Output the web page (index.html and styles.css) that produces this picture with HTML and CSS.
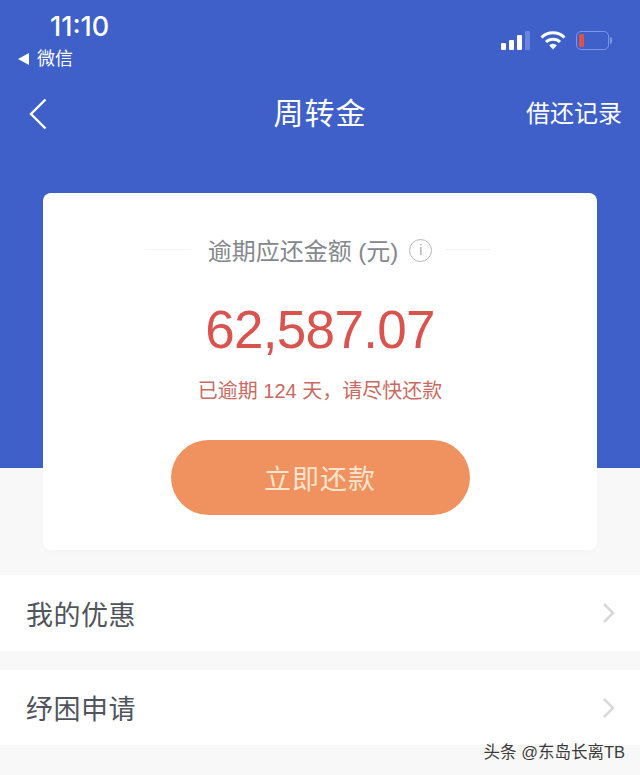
FILE: index.html
```html
<!DOCTYPE html>
<html lang="zh-CN">
<head>
    <meta charset="UTF-8">
    <meta name="viewport" content="width=device-width, initial-scale=1.0">
    <title>周转金</title>
    <link rel="stylesheet" href="styles.css">
</head>
<body>

    <div class="page">
        <header class="hero">
            <div class="status-bar">
                <div class="status-left">
                    <div class="time">11:10</div>
                    <div class="back-app"><span class="back-tri"></span>微信</div>
                </div>
                <div class="status-right">
                    <div class="signal">
                        <span class="bar bar-1"></span>
                        <span class="bar bar-2"></span>
                        <span class="bar bar-3"></span>
                        <span class="bar bar-4"></span>
                    </div>
                    <svg class="wifi" width="26" height="20" viewBox="0 0 26 20">
                        <path d="M1.5 7.5a16.5 16.5 0 0 1 23 0" fill="none" stroke="#fff" stroke-width="3"/>
                        <path d="M6 12a10 10 0 0 1 14 0" fill="none" stroke="#fff" stroke-width="3"/>
                        <path d="M13 19.500l-3.800-4.300a5.400 5.400 0 0 1 7.600 0z" fill="#fff"/>
                    </svg>
                    <div class="battery">
                        <div class="battery-body"><span class="battery-level"></span></div>
                        <span class="battery-tip"></span>
                    </div>
                </div>
            </div>
            <nav class="nav">
                <svg class="nav-back" width="20" height="34" viewBox="0 0 20 34">
                    <path d="M17.500 2.500L3 17l14.500 14.500" fill="none" stroke="#fff" stroke-width="2.400"/>
                </svg>
                <h1 class="nav-title">周转金</h1>
                <a class="nav-link">借还记录</a>
            </nav>
        </header>

        <main class="content">
            <section class="card">
                <div class="card-label">
                    <span class="fade-line"></span>
                    <span class="label-text">逾期应还金额 (元)</span>
                    <span class="info-icon">i</span>
                    <span class="fade-line"></span>
                </div>
                <div class="amount">62,587.07</div>
                <div class="overdue">已逾期 124 天，请尽快还款</div>
                <button class="repay-btn" type="button">立即还款</button>
            </section>

            <div class="row row-first">
                <span>我的优惠</span>
                <svg class="chevron" width="14" height="22" viewBox="0 0 14 22"><path d="M2 2l9 9-9 9" fill="none" stroke="#d8d8d8" stroke-width="2.500"/></svg>
            </div>
            <div class="row row-second">
                <span>纾困申请</span>
                <svg class="chevron" width="14" height="22" viewBox="0 0 14 22"><path d="M2 2l9 9-9 9" fill="none" stroke="#d8d8d8" stroke-width="2.500"/></svg>
            </div>
            <div class="footer-strip"></div>
        </main>

        <div class="watermark">头条 @东岛长离TB</div>
    </div>

</body>
</html>
```

FILE: styles.css
```css
* {
    box-sizing: border-box;
}
html, body {
    margin: 0;
    padding: 0;
}
body {
    font-family: "Liberation Sans", "Noto Sans CJK SC", sans-serif;
    background-color: #f8f8f8;
}
.page {
    position: relative;
    width: 640px;
    height: 775px;
    overflow: hidden;
}
.hero {
    height: 468px;
    background: #3e60c8;
    color: white;
    padding: 11px 18px 0 18px;
}
.status-bar {
    display: flex;
    justify-content: space-between;
    align-items: flex-start;
}
.status-left {
    display: flex;
    flex-direction: column;
}
.time {
    font-family: "Inter", "Liberation Sans", sans-serif;
    font-size: 27px;
    line-height: 32px;
    font-weight: 500;
    margin-left: 32px;
}
.back-app {
    display: flex;
    align-items: center;
    font-size: 18px;
    line-height: 28px;
    margin-top: 2px;
}
.back-tri {
    width: 0;
    height: 0;
    border-top: 6px solid transparent;
    border-bottom: 6px solid transparent;
    border-right: 11px solid white;
    margin-right: 8px;
}
.status-right {
    display: flex;
    align-items: center;
    gap: 10px;
    margin-top: 19px;
    margin-right: 10px;
}
.signal {
    display: flex;
    align-items: flex-end;
    gap: 3px;
    height: 20px;
}
.bar {
    display: block;
    width: 5px;
    background: white;
    border-radius: 1px;
}
.bar-1 { height: 7px; }
.bar-2 { height: 10px; }
.bar-3 { height: 15px; }
.bar-4 { height: 19px; background: #6a86dc; }
.battery {
    display: flex;
    align-items: center;
    gap: 1px;
}
.battery-body {
    width: 33px;
    height: 19px;
    border: 1.500px solid #7d97e6;
    border-radius: 5px;
    padding: 2px;
}
.battery-level {
    display: block;
    width: 5px;
    height: 100%;
    background: #e2504a;
    border-radius: 1px;
}
.battery-tip {
    width: 2px;
    height: 7px;
    background: #7d97e6;
    border-radius: 0 2px 2px 0;
}
.nav {
    display: flex;
    align-items: center;
    justify-content: space-between;
    position: relative;
    height: 40px;
    margin-top: 21px;
}
.nav-back {
    margin-left: 10px;
}
.nav-title {
    position: absolute;
    left: 0;
    right: 0;
    text-align: center;
    margin: 0;
    font-size: 30px;
    font-weight: 400;
    line-height: 40px;
    letter-spacing: 1px;
}
.nav-link {
    font-size: 24px;
    line-height: 40px;
    white-space: nowrap;
}
.content {
    margin-top: -275px;
}
.card {
    margin: 0 43px;
    height: 357px;
    background: white;
    border-radius: 8px;
    display: flex;
    flex-direction: column;
    align-items: center;
    padding-top: 39px;
    box-shadow: 0 2px 8px rgba(0, 0, 0, 0.02);
}
.card-label {
    display: flex;
    align-items: center;
    width: 100%;
    height: 34px;
    padding: 0 100px;
    color: #84888c;
    font-size: 24px;
    position: relative;
    justify-content: center;
}
.label-text {
    white-space: nowrap;
}
.info-icon {
    width: 23px;
    height: 23px;
    border: 1.500px solid #b8b8b8;
    border-radius: 50%;
    color: #a8a8a8;
    font-size: 14px;
    line-height: 20px;
    text-align: center;
    margin-left: 11px;
    margin-top: 2px;
    flex: none;
}
.fade-line {
    position: absolute;
    top: 17px;
    height: 1px;
    width: 46px;
    background: #f4f4f4;
}
.fade-line:first-child { left: 102px; }
.fade-line:last-child { right: 106px; }
.amount {
    margin-top: 32px;
    color: #d9544f;
    font-size: 53px;
    line-height: 64px;
    letter-spacing: -0.700px;
}
.overdue {
    margin-top: 14px;
    color: #c96a62;
    font-size: 20px;
    line-height: 30px;
    white-space: nowrap;
}
.repay-btn {
    margin-top: 34px;
    width: 299px;
    height: 75px;
    border: none;
    border-radius: 38px;
    background: #f0925f;
    color: #fde4cf;
    font-family: inherit;
    font-size: 27px;
    letter-spacing: 1px;
}
.row {
    display: flex;
    align-items: center;
    justify-content: space-between;
    height: 76px;
    background: white;
    padding: 0 24px 0 26px;
    color: #50545c;
    font-size: 27px;
    letter-spacing: 0.500px;
}
.row-first {
    margin-top: 25px;
}
.row-second {
    margin-top: 19px;
    height: 75px;
}
.footer-strip {
    height: 30px;
    background: #f8f8f8;
}
.watermark {
    position: absolute;
    right: 15px;
    bottom: 12px;
    color: #3a3a3a;
    font-size: 16.500px;
    line-height: 22px;
    text-shadow: 0 0 2px #fff;
}
```
